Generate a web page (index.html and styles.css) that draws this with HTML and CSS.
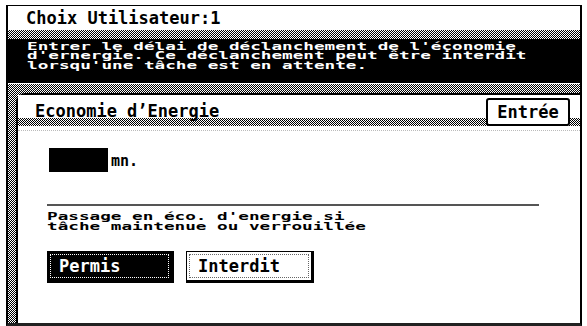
FILE: index.html
```html
<!DOCTYPE html>
<html lang="fr">
<head>
<meta charset="utf-8">
<title>Choix Utilisateur</title>
<link rel="stylesheet" href="styles.css">
</head>
<body>
<div class="screen">
  <header class="title">Choix Utilisateur:1</header>
  <div class="hatch band"></div>
  <div class="msg">
    <p class="wide">Entrer le délai de déclanchement de l'économie<br>d'ernergie. Ce déclanchement peut être interdit<br>lorsqu'une tâche est en attente.</p>
  </div>
  <div class="frame hatch">
    <section class="panel">
      <div class="panel-head">
        <h2 class="panel-title">Economie d’Energie</h2>
        <button class="enter">Entrée</button>
      </div>
      <div class="dots"></div>
      <div class="field">
        <span class="input"></span>
        <span class="unit">mn.</span>
      </div>
      <div class="rule"></div>
      <p class="wide note">Passage en éco. d'energie si<br>tâche maintenue ou verrouillée</p>
      <div class="choices">
        <button class="opt on"><span>Permis</span></button>
        <button class="opt"><span>Interdit</span></button>
      </div>
    </section>
  </div>
</div>
</body>
</html>
```

FILE: styles.css
```css
html, body {
  margin: 0;
  padding: 0;
  background: #fff;
}
body {
  width: 587px;
  height: 326px;
  overflow: hidden;
  font-family: "DejaVu Sans Mono", "Liberation Mono", monospace;
  color: #000;
}
.screen {
  margin: 5px 0 0 6px;
  width: 572px;
  height: 317px;
  border-left: 2px solid #000;
  border-top: 1px solid #000;
  border-right: 2px solid #000;
  border-bottom: 3px solid #222;
  display: flex;
  flex-direction: column;
}
.hatch {
  background: repeating-conic-gradient(#000 0 25%, #fff 0 50%) 0 0 / 2px 2px;
}
.title {
  height: 24px;
  padding-left: 18px;
  font-size: 17px;
  font-weight: bold;
  line-height: 24px;
}
.band {
  height: 9px;
}
.msg {
  height: 44px;
  background: #000;
  color: #fff;
  border-bottom: 1px solid #fff;
}
.wide {
  display: block;
  width: max-content;
  margin: 0;
  font-size: 10px;
  font-weight: bold;
  line-height: 9.4px;
  white-space: nowrap;
  transform: scaleX(1.765);
  transform-origin: 0 0;
}
.msg .wide {
  margin: 3px 0 0 19px;
}
.frame {
  flex: 1;
  padding: 9px 0 0 8px;
  display: flex;
}
.panel {
  flex: 1;
  background: #fff;
  border-left: 2px solid #000;
  border-top: 2px solid #000;
  border-top-left-radius: 9px;
  display: flex;
  flex-direction: column;
}
.panel-head {
  height: 31px;
  display: flex;
  justify-content: space-between;
  align-items: flex-start;
  background:
    linear-gradient(#fff, #fff) 0 0 / 100% 23px no-repeat,
    repeating-conic-gradient(#000 0 25%, #fff 0 50%) 0 0 / 2px 2px;
}
.panel-title {
  margin: 6px 0 0 17px;
  font-size: 17px;
  font-weight: bold;
  line-height: 20px;
}
.enter {
  margin: 3px 10px 0 0;
  width: 84px;
  height: 28px;
  padding: 0;
  background: #fff;
  border: 2px solid #000;
  border-radius: 3px;
  font-family: inherit;
  font-size: 17px;
  font-weight: bold;
  line-height: 22px;
  color: #000;
}
.dots {
  margin-top: 4px;
  height: 1px;
  border-top: 1px dotted #bbb;
}
.field {
  margin: 16px 0 0 31px;
  display: flex;
  align-items: flex-end;
  gap: 3px;
}
.input {
  width: 59px;
  height: 24px;
  background: #000;
}
.unit {
  font-size: 15px;
  font-weight: bold;
  line-height: 18px;
  padding-bottom: 2px;
}
.rule {
  margin: 32px 0 0 29px;
  width: 492px;
  height: 2px;
  background: #555;
}
.note {
  margin: 6px 0 0 29px;
  line-height: 9.6px;
}
.choices {
  margin: 20px 0 0 29px;
  display: flex;
  gap: 12px;
}
.opt {
  width: 128px;
  height: 32px;
  padding: 2px;
  background: #fff;
  border: 1px solid #000;
  border-right-width: 3px;
  border-bottom-width: 3px;
  font-family: inherit;
  font-size: 17px;
  font-weight: bold;
  color: #000;
  display: flex;
}
.opt span {
  flex: 1;
  border: 1px dotted #666;
  text-align: left;
  padding-left: 8px;
  line-height: 22px;
}
.opt.on {
  width: 127px;
  background: #000;
  color: #fff;
}
.opt.on span {
  border-color: #fff;
}
```
